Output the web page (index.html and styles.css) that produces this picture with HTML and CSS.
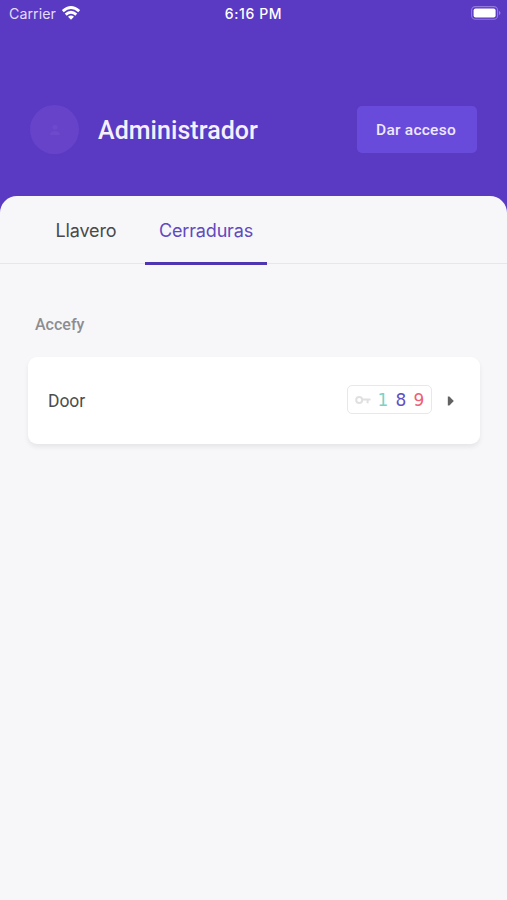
FILE: index.html
```html
<!DOCTYPE html>
<html lang="es">
<head>
<meta charset="utf-8">
<title>Accefy</title>
<link rel="stylesheet" href="styles.css">
</head>
<body>
<header class="status">
  <div class="carrier"><span class="carrier-name">Carrier</span>
    <svg class="wifi" width="18" height="14" viewBox="0 0 18 14" fill="none" stroke="#fff" stroke-width="2.8"><path d="M.8 5.2Q9-2.2 17.2 5.2M3.7 8.6Q9 3.8 14.3 8.6"/><path d="M6 10.8Q9 8.2 12 10.8L9 13.8Z" fill="#fff" stroke="none"/></svg>
  </div>
  <time class="time">6:16 PM</time>
  <svg class="battery" width="30" height="14" viewBox="0 0 30 14"><rect x=".6" y=".6" width="26" height="12.6" rx="3.8" fill="none" stroke="#9379da" stroke-width="1.1"/><rect x="2.6" y="2.6" width="22" height="8.8" rx="2" fill="#fff"/><path d="M28 4.8Q31 7 28 9.2Z" fill="#9379da"/></svg>
</header>
<section class="profile">
  <div class="avatar"><svg width="10" height="12" viewBox="0 0 10 12" fill="#7a56cf"><circle cx="5" cy="3.2" r="2.5"/><path d="M0 11Q0 7 5 7T10 11Z"/></svg></div>
  <h1 class="name">Administrador</h1>
  <button class="grant"><span>Dar acceso</span></button>
</section>
<main class="sheet">
  <nav class="tabs">
    <a class="tab first"><span>Llavero</span></a>
    <a class="tab active"><span>Cerraduras</span></a>
  </nav>
  <h2 class="group">Accefy</h2>
  <article class="card">
    <span class="door">Door</span>
    <div class="keys">
      <svg class="key" width="16" height="10" viewBox="0 0 16 10" fill="none" stroke="#e0e0e2" stroke-width="2"><circle cx="4.2" cy="5" r="3"/><path d="M7.2 4.6H15.5M12.6 4.6V8.2"/></svg>
      <span class="num teal">1</span><span class="num violet">8</span><span class="num red">9</span>
    </div>
    <svg class="arrow" width="7" height="10" viewBox="0 0 7 10"><path d="M.8.4H2.4L6.8 5 2.4 9.6H.8Z" fill="#626262"/></svg>
  </article>
</main>
</body>
</html>
```
FILE: styles.css
```css
* { box-sizing: border-box; }
body {
  margin: 0;
  height: 900px;
  display: flex;
  flex-direction: column;
  background: #5a39c3;
  font-family: Roboto, "Noto Sans", sans-serif;
  overflow: hidden;
}
.status {
  height: 28px;
  padding: 0 6px 2px 9px;
  display: grid;
  grid-template-columns: 1fr auto 1fr;
  align-items: center;
  color: #fff;
  font-family: Inter, sans-serif;
}
.carrier { display: flex; align-items: center; gap: 6px; }
.carrier-name { font-size: 14.2px; color: #e5dcfa; letter-spacing: .05px; }
.wifi { margin-top: -1px; }
.time { font-size: 14px; font-weight: 500; letter-spacing: .6px; margin-right: 3px; }
.battery { justify-self: end; }
.profile {
  height: 168px;
  padding: 78px 30px 0 30px;
  display: flex;
  align-items: flex-start;
}
.avatar {
  width: 49px;
  height: 49px;
  margin-top: -1px;
  border-radius: 50%;
  background: #6743ca;
  display: grid;
  place-items: center;
}
.avatar svg { opacity: .35; }
.name {
  margin: 1px 0 0 19px;
  flex: 1;
  font-size: 25px;
  line-height: 47px;
  font-weight: 500;
  letter-spacing: .05px;
  color: #f5f0ff;
}
.grant {
  width: 120px;
  height: 47px;
  padding: 0 2px 0 0;
  border: 0;
  border-radius: 5px;
  background: #694bdc;
  color: #efe8ff;
  font: 500 15.5px Roboto, sans-serif;
  letter-spacing: .25px;
}
.sheet {
  flex: 1;
  background: #f7f7fa;
  border-radius: 17px 17px 0 0;
}
.tabs {
  height: 68px;
  padding-left: 27px;
  display: flex;
  border-bottom: 1px solid #e7e7ea;
}
.tab {
  height: 69px;
  font: 18px/70px Inter, sans-serif;
  letter-spacing: -.15px;
  text-align: center;
  color: #494949;
}
.first { width: 118px; }
.active {
  width: 122px;
  color: #6149be;
  border-bottom: 3px solid #4e35b2;
}
.group {
  margin: 50px 0 0 35px;
  font-size: 16px;
  line-height: 22px;
  font-weight: 500;
  color: #8d8d90;
}
.card {
  margin: 21px 27px 0 28px;
  height: 87px;
  padding: 0 26px 0 20px;
  display: flex;
  align-items: center;
  background: #fff;
  border-radius: 9px;
  box-shadow: 0 3px 5px rgba(0, 0, 0, .07);
}
.door { flex: 1; font-size: 17.5px; letter-spacing: -.1px; color: #4d4d4d; }
.keys {
  width: 85px;
  height: 29px;
  margin-bottom: 3px;
  padding: 2px 0 0 7px;
  display: flex;
  align-items: center;
  border: 1.5px solid #e8e8eb;
  border-radius: 5px;
}
.num { width: 18px; text-align: center; font: 17px/26px "DejaVu Sans", sans-serif; }
.key { margin-right: 3px; }
.teal { color: #77d3c8; }
.violet { color: #6250c0; }
.red { color: #ee6073; }
.arrow { margin-left: 15px; }
```
